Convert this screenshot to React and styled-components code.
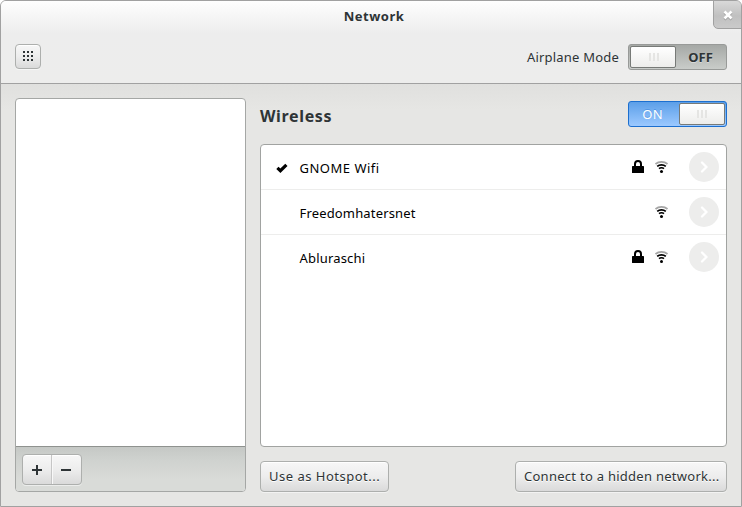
import React from "react";
import styled, { createGlobalStyle, css } from "styled-components";

const GlobalStyle = createGlobalStyle`
  * { box-sizing: border-box; }
  html, body { margin: 0; padding: 0; background: #fff; }
  body { font-family: "Noto Sans", "Open Sans", sans-serif; font-size: 13px; color: #2e3436; overflow: hidden; }
`;

const Window = styled.div`
  width: 742px;
  height: 507px;
  display: flex;
  flex-direction: column;
  position: relative;
  border: 1px solid #a1a1a1;
  border-radius: 6px 6px 0 0;
  background: #e6e6e4;
  overflow: hidden;
`;

const Header = styled.header`
  height: 83px;
  flex: none;
  border-bottom: 1px solid #a1a1a1;
  background: linear-gradient(#fff 0, #fdfdfd 2px, #ededed 32px, #ededec 100%);
`;

const Title = styled.div`
  height: 30px;
  line-height: 30px;
  padding-left: 6px;
  text-align: center;
  font-weight: 700;
  letter-spacing: 0.5px;
`;

const Toolbar = styled.div`
  display: flex;
  align-items: center;
  justify-content: space-between;
  height: 26px;
  margin: 13px 14px 0;
`;

const Text = styled.span`
  display: block;
  white-space: nowrap;
  line-height: 20px;
  font-size: ${(p) => p.$size || 13}px;
  font-weight: ${(p) => (p.$bold ? 700 : 400)};
  letter-spacing: ${(p) => p.$spacing || 0}px;
`;

const ToolbarGroup = styled.div`
  display: flex;
  align-items: center;
  gap: 9px;
`;

const raised = css`
  border: 1px solid #adafad;
  border-radius: 4px;
  background: linear-gradient(#f7f7f7, #ededed 50%, #dadada);
  box-shadow: inset 0 1px #fff, 0 1px rgba(255, 255, 255, 0.5);
  color: #2e3436;
  font: inherit;
  padding: 0;
`;

const IconButton = styled.button`
  ${raised}
  width: 26px;
  height: 25px;
  margin-bottom: 1px;
  padding-bottom: 1px;
  display: grid;
  place-items: center;
`;

const ActionButton = styled.button`
  ${raised}
  width: ${(p) => p.$width}px;
  height: 31px;
  display: flex;
  align-items: center;
  padding: 0 0 1px 8px;
  text-shadow: 0 1px #fff;
`;

const CloseButton = styled.button`
  position: absolute;
  top: -1px;
  right: -1px;
  width: 29px;
  height: 29px;
  padding: 2px 0 0;
  display: grid;
  place-items: center;
  border: 1px solid #a1a1a1;
  border-radius: 0 6px 0 5px;
  background: linear-gradient(#d9d9d9, #c0c0c0 55%, #cacaca);
`;

const Switch = styled.div`
  display: flex;
  flex-direction: ${(p) => (p.$on ? "row-reverse" : "row")};
  width: 99px;
  height: 26px;
  padding: 1px;
  border-radius: 3px;
  border: 1px solid ${(p) => (p.$on ? "#1c6fcf" : "#989a98")};
  background: ${(p) =>
    p.$on ? "linear-gradient(#5c9fe8, #9cc9ff)" : "linear-gradient(#a5a8a5, #c9ccc9)"};
  color: ${(p) => (p.$on ? "#fff" : "#2e3436")};
  text-shadow: ${(p) => (p.$on ? "0 -1px rgba(28,111,207,.4)" : "0 1px rgba(255,255,255,.4)")};
`;

const Knob = styled.div`
  width: 46px;
  height: 22px;
  display: flex;
  justify-content: center;
  align-items: center;
  gap: 2px;
  padding-left: ${(p) => (p.$on ? 0 : 2)}px;
  border: 1px solid #777a77;
  border-radius: 2px;
  background: linear-gradient(#fff, #ededeb);
`;

const Grip = styled.i`
  width: 2px;
  height: 8px;
  background: #e5e5e3;
`;

const SwitchLabel = styled.div`
  flex: 1;
  display: flex;
  justify-content: center;
  align-items: center;
  padding-right: ${(p) => (p.$on ? 4 : 0)}px;
`;

const Body = styled.main`
  flex: 1;
  display: flex;
  gap: 14px;
  padding: 14px;
  background: linear-gradient(#e0e0de, #e6e6e4 26px);
`;

const Sidebar = styled.aside`
  width: 231px;
  height: 394px;
  display: flex;
  flex-direction: column;
  border: 1px solid #a5a7a5;
  border-radius: 4px;
  overflow: hidden;
  background: #fff;
`;

const SidebarFooter = styled.div`
  height: 45px;
  margin-top: auto;
  padding: 7px 6px;
  border-top: 1px solid #8f928f;
  background: linear-gradient(#c5c8c5, #cfd2cf 30%, #d9dbd8 75%);
`;

const ButtonPair = styled.div`
  ${raised}
  width: 60px;
  height: 31px;
  display: flex;
`;

const PairButton = styled.button`
  width: 28px;
  padding: 0;
  display: grid;
  place-items: center;
  border: 0;
  background: none;
  & + & { width: 30px; padding-right: 2px; border-left: 1px solid #c6c6c6; box-shadow: inset 1px 0 #f8f8f8; }
`;

const Main = styled.section`
  width: 467px;
  display: flex;
  flex-direction: column;
`;

const Heading = styled.div`
  display: flex;
  justify-content: space-between;
  align-items: center;
  height: 32px;
  margin-bottom: 14px;
`;

const HeadingText = styled(Text)`
  padding-top: 4px;
`;

const NetworkList = styled.div`
  height: 303px;
  border: 1px solid #a1a3a1;
  border-radius: 4px;
  background: #fff;
  color: #000;
`;

const NetworkRow = styled.div`
  display: grid;
  grid-template-columns: 38.5px 1fr 23px 34px 30px;
  align-items: center;
  height: 45px;
  padding-right: 7px;
  & + & { border-top: 1px solid #ededec; height: 45px; }
  &:first-child { height: 44px; }
`;

const NetworkName = styled(Text)`
  padding-top: 2px;
`;

const Slot = styled.div`
  display: flex;
  height: 16px;
  padding-left: ${(p) => p.$indent || 0}px;
`;

const Circle = styled.div`
  width: 30px;
  height: 30px;
  border-radius: 50%;
  background: #ededec;
  display: grid;
  place-items: center;
`;

const Actions = styled.div`
  display: flex;
  justify-content: space-between;
  margin-top: 14px;
`;

const GridIcon = () => (
  <svg width="10" height="10" fill="#2e3436" shapeRendering="crispEdges">
    {[0, 4, 8].map((y) => [0, 4, 8].map((x) => <rect key={`${x}-${y}`} x={x} y={y} width="2" height="2" />))}
  </svg>
);

const CloseIcon = () => (
  <svg width="10" height="11" fill="none">
    <path d="M1.5 2.5 8.5 9.5M8.5 2.5 1.5 9.5" stroke="#999" strokeWidth="2.6" />
    <path d="M1.5 1.5 8.5 8.5M8.5 1.5 1.5 8.5" stroke="#fff" strokeWidth="2.6" />
  </svg>
);

const CheckIcon = () => (
  <svg width="12" height="16" fill="none">
    <path d="M1.4 8.9 4.4 11.7 10.4 5.9" stroke="#000" strokeWidth="3.2" />
  </svg>
);

const LockIcon = () => (
  <svg width="12" height="16">
    <path d="M3 8V5a3 3 0 0 1 6 0v3" fill="none" stroke="#000" strokeWidth="2" />
    <rect y="7" width="12" height="7" rx="0.6" />
  </svg>
);

const WifiIcon = () => (
  <svg width="14" height="16" fill="none">
    <path d="M.5 5Q3 2.9 6.5 2.9T12.5 5" stroke="#a6a6a6" strokeWidth="1.8" />
    <path d="M2.2 7.4Q4 5.8 6.5 5.8T10.8 7.4" stroke="#000" strokeWidth="1.7" />
    <path d="M4 9.7Q5 8.8 6.5 8.8T9 9.7" stroke="#000" strokeWidth="1.6" />
    <circle cx="6.5" cy="12.5" r="1.5" fill="#000" />
  </svg>
);

const ChevronIcon = () => (
  <svg width="8" height="12" fill="none">
    <path d="M2 1.5 6.4 6 2 10.5" stroke="#fff" strokeWidth="2.3" strokeLinecap="round" />
  </svg>
);

const PlusIcon = () => (
  <svg width="10" height="10" fill="#2e3436">
    <path d="M4 0h2v4h4v2H6v4H4V6H0V4h4z" />
  </svg>
);

const MinusIcon = () => (
  <svg width="10" height="10" fill="#2e3436">
    <path d="M0 4h10v2H0z" />
  </svg>
);

const Toggle = ({ on }) => (
  <Switch $on={on}>
    <Knob $on={on}><Grip /><Grip /><Grip /></Knob>
    <SwitchLabel $on={on}><Text $bold={!on} $spacing={on ? 0.2 : 0}>{on ? "ON" : "OFF"}</Text></SwitchLabel>
  </Switch>
);

const networks = [
  { name: "GNOME Wifi", active: true, locked: true, spacing: 0.5 },
  { name: "Freedomhatersnet", spacing: 0.16 },
  { name: "Abluraschi", locked: true, spacing: 0.18 },
];

export default function App() {
  return (
    <>
      <GlobalStyle />
      <Window>
        <Header>
          <Title>Network</Title>
          <Toolbar>
            <IconButton aria-label="All settings"><GridIcon /></IconButton>
            <ToolbarGroup>
              <Text $spacing={0.2}>Airplane Mode</Text>
              <Toggle />
            </ToolbarGroup>
          </Toolbar>
          <CloseButton aria-label="Close"><CloseIcon /></CloseButton>
        </Header>
        <Body>
          <Sidebar>
            <SidebarFooter>
              <ButtonPair>
                <PairButton aria-label="Add"><PlusIcon /></PairButton>
                <PairButton aria-label="Remove"><MinusIcon /></PairButton>
              </ButtonPair>
            </SidebarFooter>
          </Sidebar>
          <Main>
            <Heading>
              <HeadingText $size={16} $spacing={0.65} $bold>Wireless</HeadingText>
              <Toggle on />
            </Heading>
            <NetworkList>
              {networks.map((n) => (
                <NetworkRow key={n.name}>
                  <Slot $indent={15}>{n.active && <CheckIcon />}</Slot>
                  <NetworkName $spacing={n.spacing}>{n.name}</NetworkName>
                  <Slot>{n.locked && <LockIcon />}</Slot>
                  <Slot><WifiIcon /></Slot>
                  <Circle><ChevronIcon /></Circle>
                </NetworkRow>
              ))}
            </NetworkList>
            <Actions>
              <ActionButton $width={129}><Text $spacing={0.5}>Use as Hotspot...</Text></ActionButton>
              <ActionButton $width={212}><Text $spacing={0.27}>Connect to a hidden network...</Text></ActionButton>
            </Actions>
          </Main>
        </Body>
      </Window>
    </>
  );
}
